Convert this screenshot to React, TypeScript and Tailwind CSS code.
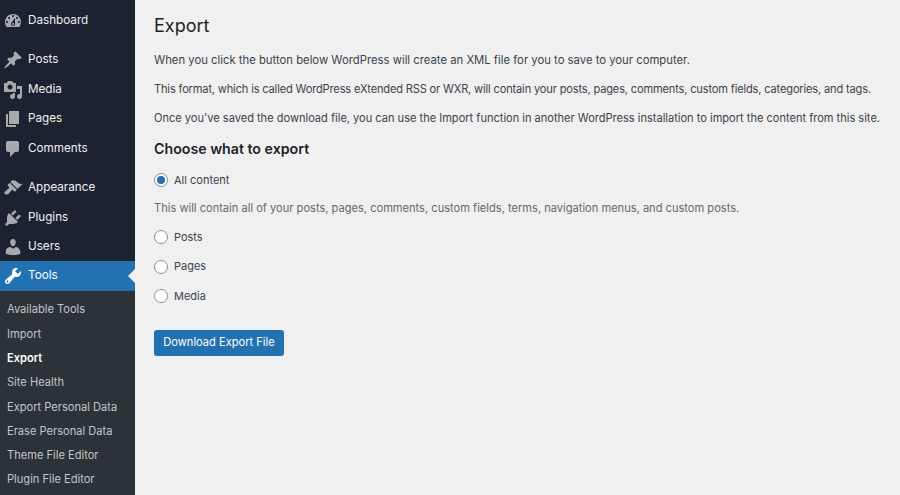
const icons: Record<string, string> = {
  dashboard:
    'M3.76 16h12.48c1.1-1.37 1.76-3.11 1.76-5 0-4.42-3.58-8-8-8s-8 3.58-8 8c0 1.89.66 3.63 1.76 5zM10 4c.55 0 1 .45 1 1s-.45 1-1 1-1-.45-1-1 .45-1 1-1zM6 6c.55 0 1 .45 1 1s-.45 1-1 1-1-.45-1-1 .45-1 1-1zm8 0c.55 0 1 .45 1 1s-.45 1-1 1-1-.45-1-1 .45-1 1-1zm-5.37 5.55L12 7v6c0 1.1-.9 2-2 2s-2-.9-2-2c0-.57.24-1.08.63-1.45zM4 10c.55 0 1 .45 1 1s-.45 1-1 1-1-.45-1-1 .45-1 1-1zm12 0c.55 0 1 .45 1 1s-.45 1-1 1-1-.45-1-1 .45-1 1-1zm-5 3c0-.55-.45-1-1-1s-1 .45-1 1 .45 1 1 1 1-.45 1-1z',
  posts:
    'M10.44 3.02l1.82-1.82 6.36 6.35-1.83 1.82c-1.05-.68-2.48-.57-3.41.36l-.75.75c-.92.93-1.04 2.35-.35 3.41l-1.83 1.82-2.41-2.41-2.8 2.79c-.42.42-3.38 2.71-3.8 2.29s1.86-3.39 2.28-3.81l2.79-2.79L4.1 9.36l1.83-1.82c1.05.69 2.48.57 3.4-.36l.75-.75c.93-.92 1.05-2.35.36-3.41z',
  media:
    'M13 11V4c0-.55-.45-1-1-1h-1.67L9 1H5L3.67 3H2c-.55 0-1 .45-1 1v7c0 .55.45 1 1 1h10c.55 0 1-.45 1-1zM7 4.5c1.38 0 2.5 1.12 2.5 2.5S8.38 9.5 7 9.5 4.5 8.38 4.5 7 5.62 4.5 7 4.5zM14 6h5v10.5c0 1.38-1.12 2.5-2.5 2.5S14 17.88 14 16.5s1.12-2.5 2.5-2.5c.17 0 .34.02.5.05V9h-3V6zm-4 8.05V13h2v3.5c0 1.38-1.12 2.5-2.5 2.5S7 17.88 7 16.5 8.12 14 9.5 14c.17 0 .34.02.5.05z',
  pages: 'M6 15V2h10v13H6zm-1 1h8v2H3V5h2v11z',
  comments:
    'M5 2h9c1.1 0 2 .9 2 2v7c0 1.1-.9 2-2 2h-2l-5 5v-5H5c-1.1 0-2-.9-2-2V4c0-1.1.9-2 2-2z',
  appearance:
    'M14.48 11.06L7.41 3.99l1.5-1.5c.5-.56 2.3-.47 3.51.32 1.21.8 1.43 1.28 2.91 2.1 1.18.64 2.45 1.26 4.45.85zm-.71.71L6.7 4.7 4.93 6.47c-.39.39-.39 1.02 0 1.41l1.06 1.06c.39.39.39 1.03 0 1.42-.6.6-1.43 1.11-2.21 1.69-.35.26-.7.53-1.01.84C1.43 13.23.91 14.75 2 16c1.09 1.09 2.7.55 3.97-.6.36-.3.67-.66.99-1.04.6-.78 1.07-1.61 1.69-2.21.38-.39 1.02-.39 1.41 0l1.06 1.06c.39.39 1.02.39 1.41 0z',
  plugins:
    'M13.11 4.36L9.87 7.6 8 5.73l3.24-3.24c.35-.34 1.05-.2 1.56.32.52.51.66 1.21.31 1.55zm-8 1.77l.91-1.12 9.01 9.01-1.19.84c-.71.71-2.63 1.16-3.82 1.16H6.14L4.9 17.26c-.59.59-1.54.59-2.12 0-.59-.58-.59-1.53 0-2.12l1.24-1.24v-3.88c0-1.13.4-3.19 1.09-3.89zm7.26 3.97l3.24-3.24c.34-.35 1.04-.21 1.55.31.52.51.66 1.21.31 1.55l-3.24 3.25z',
  users:
    'M10 9.25c-2.27 0-2.73-3.44-2.73-3.44C7 4.02 7.82 2 9.97 2c2.16 0 2.98 2.02 2.71 3.81 0 0-.41 3.44-2.68 3.44zm0 2.57L12.72 10c2.39 0 4.52 2.33 4.52 4.53v2.49s-3.65 1.13-7.24 1.13c-3.65 0-7.24-1.13-7.24-1.13v-2.49c0-2.25 1.94-4.48 4.47-4.48z',
  tools:
    'M16.68 9.77c-1.34 1.34-3.3 1.67-4.95.99l-5.41 6.52c-.99.99-2.59.99-3.58 0s-.99-2.59 0-3.57l6.52-5.42c-.68-1.65-.35-3.61.99-4.95 1.28-1.28 3.12-1.62 4.72-1.06l-2.89 2.89 2.82 2.82 2.86-2.87c.53 1.58.18 3.39-1.08 4.65zM3.81 16.21c.4.39 1.04.39 1.43 0 .4-.4.4-1.04 0-1.43-.39-.4-1.03-.4-1.43 0-.39.39-.39 1.03 0 1.43z',
};

function MenuItem({ icon, label, active }: { icon: string; label: string; active?: boolean }) {
  return (
    <div className={`relative flex h-[29.5px] items-center ${active ? '-mt-[1px] bg-[#2271b1] text-white' : 'text-[#f0f0f1]'}`}>
      <svg viewBox="0 0 20 20" className={`ml-[3px] h-5 w-5 ${active ? 'fill-white' : 'fill-[#a7aaad]'}`}>
        <path fillRule="evenodd" d={icons[icon]} />
      </svg>
      <span className="ml-[5px] text-[11.7px]">{label}</span>
      {active && (
        <div className="absolute right-0 top-[8px] h-0 w-0 border-y-[7px] border-r-[7px] border-y-transparent border-r-[#f0f0f1]" />
      )}
    </div>
  );
}

const submenu = [
  'Available Tools',
  'Import',
  'Export',
  'Site Health',
  'Export Personal Data',
  'Erase Personal Data',
  'Theme File Editor',
  'Plugin File Editor',
];

function Radio({ label, checked }: { label: string; checked?: boolean }) {
  return (
    <div className="flex h-[16px] items-center gap-[6px]">
      <div className="flex h-[14px] w-[14px] items-center justify-center rounded-full border border-[#8c8f94] bg-white">
        {checked && <div className="h-[8px] w-[8px] rounded-full bg-[#2271b1]" />}
      </div>
      <span className="text-[11px] text-[#3c434a]">{label}</span>
    </div>
  );
}

export default function App() {
  return (
    <div className="flex h-[495px] w-[900px] overflow-hidden bg-[#f0f0f1] font-['Inter',sans-serif]">
      <aside className="flex w-[135px] shrink-0 flex-col bg-[#1c2230]">
        <div className="mt-[6px]">
          <MenuItem icon="dashboard" label="Dashboard" />
        </div>
        <div className="mt-[9.75px]">
          <MenuItem icon="posts" label="Posts" />
          <MenuItem icon="media" label="Media" />
          <MenuItem icon="pages" label="Pages" />
          <MenuItem icon="comments" label="Comments" />
        </div>
        <div className="mt-[10.25px]">
          <MenuItem icon="appearance" label="Appearance" />
          <MenuItem icon="plugins" label="Plugins" />
          <MenuItem icon="users" label="Users" />
          <MenuItem icon="tools" label="Tools" active />
        </div>
        <div className="flex flex-1 flex-col bg-[#2c3338] pt-[7px]">
          {submenu.map((item) => (
            <div
              key={item}
              className={`flex h-[24.3px] items-center pl-[7px] text-[11.1px] ${
                item === 'Export' ? 'font-semibold text-white' : 'text-[#c3c4c7]'
              }`}
            >
              {item}
            </div>
          ))}
        </div>
      </aside>

      <main className="flex-1 pl-[19px]">
        <h1 className="mt-[13px] text-[18px] leading-[25px] text-[#1d2327]">Export</h1>
        <div className="mt-[14px] flex flex-col gap-[13px] leading-[16px] whitespace-nowrap text-[#3c434a]">
          <p className="text-[11.3px]">When you click the button below WordPress will create an XML file for you to save to your computer.</p>
          <p className="text-[11.05px] tracking-[-0.15px]">This format, which is called WordPress eXtended RSS or WXR, will contain your posts, pages, comments, custom fields, categories, and tags.</p>
          <p className="text-[11.05px]">Once you've saved the download file, you can use the Import function in another WordPress installation to import the content from this site.</p>
        </div>
        <h2 className="mt-[12.5px] text-[14.2px] leading-[20px] font-semibold text-[#1d2327]">Choose what to export</h2>
        <div className="mt-[13.5px]">
          <Radio label="All content" checked />
        </div>
        <p className="mt-[12px] text-[11.1px] leading-[16px] text-[#646970]">
          This will contain all of your posts, pages, comments, custom fields, terms, navigation menus, and custom posts.
        </p>
        <div className="mt-[13px] flex flex-col gap-[13.5px]">
          <Radio label="Posts" />
          <Radio label="Pages" />
          <Radio label="Media" />
        </div>
        <button className="mt-[25.5px] h-[26px] w-[130px] rounded-[3px] bg-[#2271b1] text-[11.1px] text-white">
          Download Export File
        </button>
      </main>
    </div>
  );
}
